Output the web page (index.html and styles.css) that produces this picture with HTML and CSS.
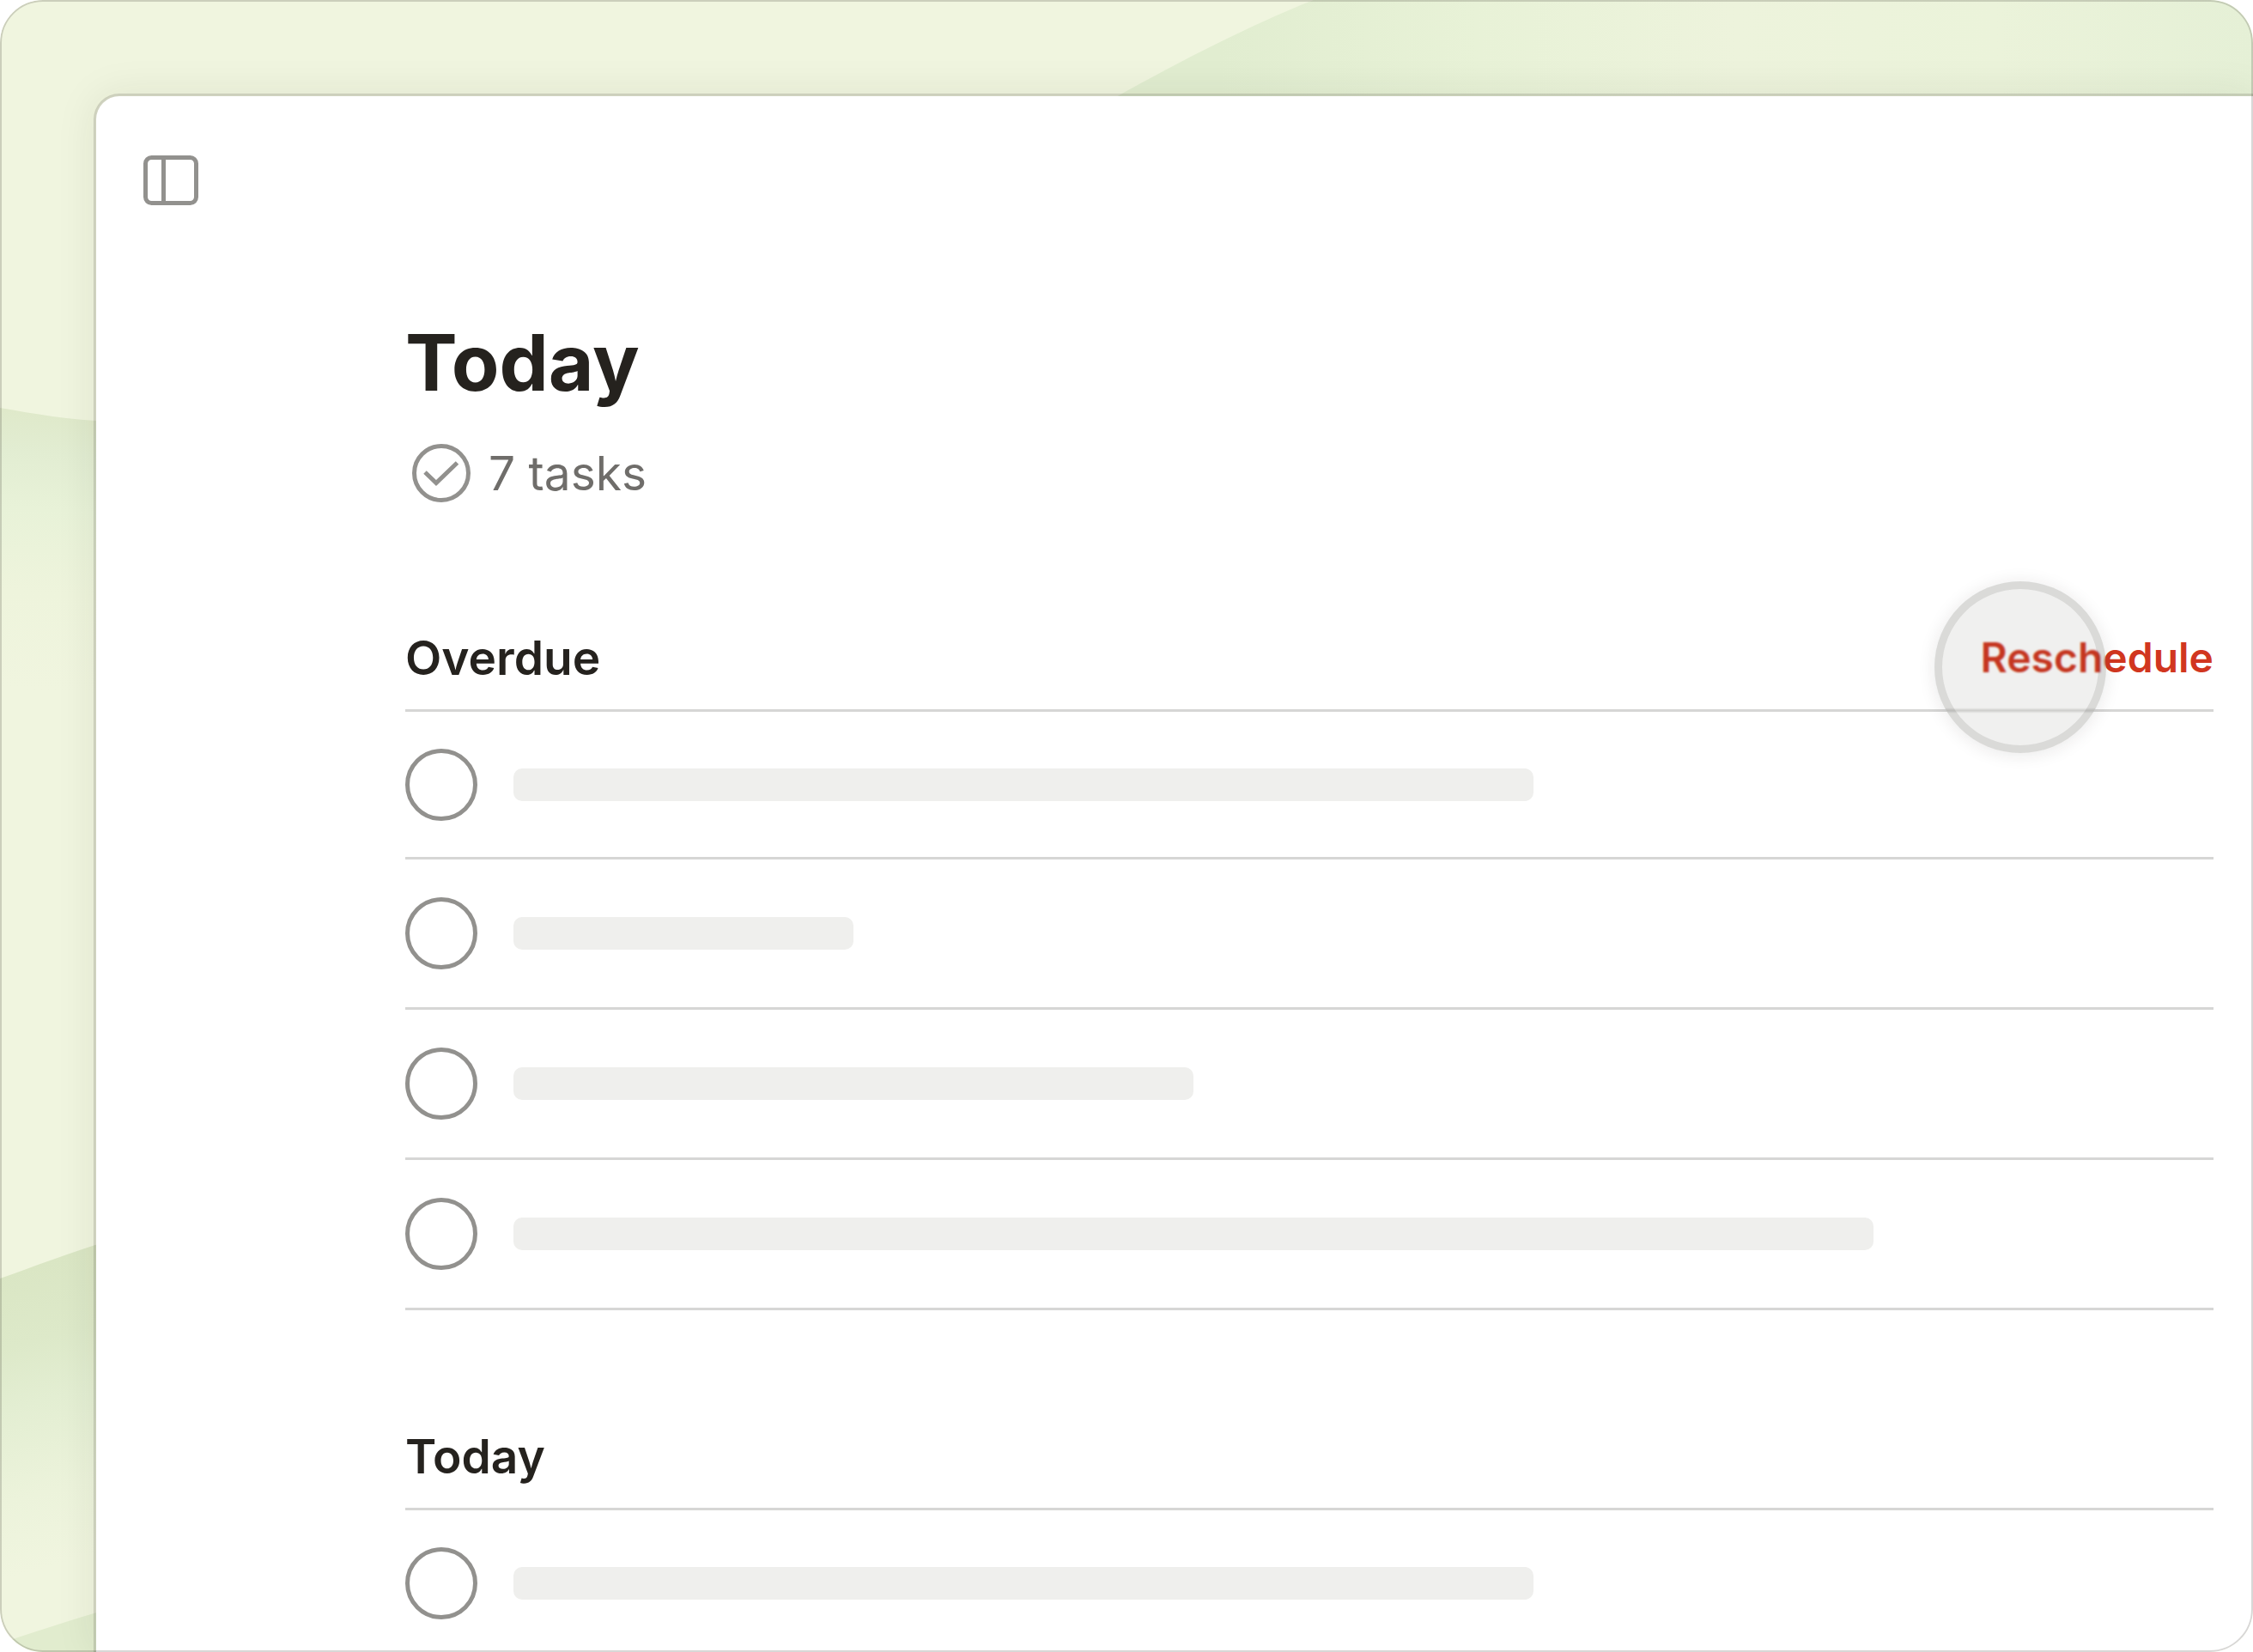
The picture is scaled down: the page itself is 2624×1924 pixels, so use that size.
FILE: index.html
```html
<!DOCTYPE html>
<html lang="en">
<head>
    <meta charset="UTF-8">
    <meta name="viewport" content="width=device-width, initial-scale=1.0">
    <title>Today</title>
    <link rel="stylesheet" href="styles.css">
</head>
<body>
    <div class="frame">
        <!-- Green waves behind the app window -->
        <svg class="waves" viewBox="0 0 2624 1924" preserveAspectRatio="xMinYMin slice" aria-hidden="true">
            <defs>
                <linearGradient id="wave-top" gradientUnits="userSpaceOnUse" x1="1420" y1="60" x2="2624" y2="0">
                    <stop offset="0" stop-color="#e1edd0"/>
                    <stop offset="0.25" stop-color="#e8f2d7"/>
                    <stop offset="0.5" stop-color="#edf3dc"/>
                    <stop offset="0.75" stop-color="#ebf3da"/>
                    <stop offset="1" stop-color="#e5f0d6"/>
                </linearGradient>
                <linearGradient id="wave-one" gradientUnits="userSpaceOnUse" x1="0" y1="476" x2="-20" y2="800">
                    <stop offset="0" stop-color="#dfe9ca"/>
                    <stop offset="0.15" stop-color="#e2edd2"/>
                    <stop offset="0.35" stop-color="#e8f2d8"/>
                    <stop offset="0.65" stop-color="#eef4dc"/>
                    <stop offset="1" stop-color="#f0f5df"/>
                </linearGradient>
                <linearGradient id="wave-two" gradientUnits="userSpaceOnUse" x1="60" y1="1467" x2="150" y2="1800">
                    <stop offset="0" stop-color="#dae6c4"/>
                    <stop offset="0.25" stop-color="#dde9c9"/>
                    <stop offset="0.45" stop-color="#e3eed2"/>
                    <stop offset="0.75" stop-color="#ecf3db"/>
                    <stop offset="1" stop-color="#f0f5df"/>
                </linearGradient>
            </defs>
            <rect width="2624" height="1924" fill="#f0f5df"/>
            <path d="M1530 0 C1460 28 1380 68 1298 114 V200 H2624 V0 Z" fill="url(#wave-top)"/>
            <path d="M0 475 C40 482 80 489 130 491 V900 H0 Z" fill="url(#wave-one)"/>
            <path d="M0 1489 C40 1475 80 1459 130 1444 V1924 H0 Z" fill="url(#wave-two)"/>
            <path d="M0 1914 C40 1901 80 1887 130 1873 V1924 H0 Z" fill="#e1ecce"/>
        </svg>

        <main class="window">
            <div class="toolbar">
                <button class="sidebar-toggle" type="button" aria-label="Toggle sidebar">
                    <svg width="66" height="60" viewBox="0 0 66 60" fill="none" stroke="#92918e" stroke-width="5">
                        <rect x="3.5" y="3.5" width="59" height="53" rx="7"/>
                        <path d="M24.5 3.5v53"/>
                    </svg>
                </button>
            </div>

            <div class="content">
                <h1>Today</h1>
                <p class="task-count">
                    <svg width="70" height="70" viewBox="0 0 70 70" fill="none" stroke="#92918e" stroke-width="5" aria-hidden="true">
                        <circle cx="35" cy="35" r="31.5"/>
                        <path d="M16 34l13 12.500L53.500 23"/>
                    </svg>
                    7 tasks
                </p>

                <section class="group">
                    <div class="group-header">
                        <h2>Overdue</h2>
                        <div class="action">
                            <button class="reschedule" type="button">Reschedule</button>
                            <span class="pointer"></span>
                        </div>
                    </div>
                    <ul class="tasks">
                        <li class="task">
                            <input type="checkbox" aria-label="Complete overdue task 1">
                            <div class="track"><div class="bar" style="width: 60%"></div></div>
                        </li>
                        <li class="task">
                            <input type="checkbox" aria-label="Complete overdue task 2">
                            <div class="track"><div class="bar" style="width: 20%"></div></div>
                        </li>
                        <li class="task">
                            <input type="checkbox" aria-label="Complete overdue task 3">
                            <div class="track"><div class="bar" style="width: 40%"></div></div>
                        </li>
                        <li class="task">
                            <input type="checkbox" aria-label="Complete overdue task 4">
                            <div class="track"><div class="bar" style="width: 80%"></div></div>
                        </li>
                    </ul>
                </section>

                <section class="group">
                    <div class="group-header">
                        <h2>Today</h2>
                    </div>
                    <ul class="tasks">
                        <li class="task">
                            <input type="checkbox" aria-label="Complete task 1 for today">
                            <div class="track"><div class="bar" style="width: 60%"></div></div>
                        </li>
                    </ul>
                </section>
            </div>
        </main>
    </div>
</body>
</html>
```
FILE: styles.css
```css
* {
    margin: 0;
    padding: 0;
    box-sizing: border-box;
}

body {
    font-family: Inter, 'Liberation Sans', sans-serif;
    background-color: #ffffff;
    color: #25221e;
}

.frame {
    position: relative;
    display: flex;
    height: 100vh;
    padding: 109px 0 0 109px;
    border-radius: 50px;
    overflow: hidden;
}

/* Hairline drawn over everything inside the frame */
.frame::after {
    content: '';
    position: absolute;
    inset: 0;
    border: 2px solid rgba(37, 34, 30, 0.18);
    border-radius: 50px;
    pointer-events: none;
}

.waves {
    position: absolute;
    top: 0;
    left: 0;
    width: 100%;
    height: 100%;
}

/* App window, cut off on the right and at the bottom */
.window {
    position: relative;
    flex: 1;
    background: #ffffff;
    background-clip: padding-box;
    border: solid rgba(37, 34, 30, 0.16);
    border-width: 3px 0 0 3px;
    border-top-left-radius: 30px;
    box-shadow: 0 0 48px rgba(37, 34, 30, 0.08);
}

.toolbar {
    display: flex;
    padding: 68px 54px 0;
}

.sidebar-toggle {
    display: flex;
    border: none;
    background: none;
    cursor: pointer;
}

.content {
    padding: 126px 46px 0 360px;
}

h1 {
    font-size: 91px;
    font-weight: 700;
    line-height: 112px;
}

.task-count {
    display: flex;
    align-items: center;
    gap: 20px;
    margin-top: 38px;
    padding-left: 7px;
    font-size: 55px;
    line-height: 70px;
    color: #6f6d6a;
}

.group {
    margin-top: 138px;
}

.task-count + .group {
    margin-top: 148px;
}

.group-header {
    display: flex;
    align-items: center;
    justify-content: space-between;
    padding-bottom: 28px;
    border-bottom: 3px solid #d6d6d5;
}

h2 {
    font-size: 55px;
    font-weight: 600;
    line-height: 64px;
}

.action {
    position: relative;
    display: flex;
}

.reschedule {
    border: none;
    background: none;
    color: #d1361f;
    font: inherit;
    font-size: 48px;
    font-weight: 600;
    line-height: 64px;
    cursor: pointer;
}

/* Touch indicator over the button */
.pointer {
    position: absolute;
    top: -57px;
    right: 125px;
    width: 200px;
    height: 200px;
    border: 9px solid rgba(37, 34, 30, 0.11);
    border-radius: 50%;
    background: rgba(60, 58, 50, 0.08);
    box-shadow: 0 2px 20px rgba(37, 34, 30, 0.1);
    backdrop-filter: blur(1px);
    pointer-events: none;
}

.tasks {
    list-style: none;
}

.task {
    display: flex;
    align-items: center;
    gap: 42px;
    height: 175px;
    border-bottom: 3px solid #d6d6d5;
}

.task:first-child {
    height: 172px;
}

.task input {
    appearance: none;
    flex: none;
    width: 84px;
    height: 84px;
    border: 5px solid #92918e;
    border-radius: 50%;
    cursor: pointer;
}

.track {
    flex: 1;
}

.bar {
    height: 38px;
    border-radius: 10px;
    background: #efefed;
}
```
